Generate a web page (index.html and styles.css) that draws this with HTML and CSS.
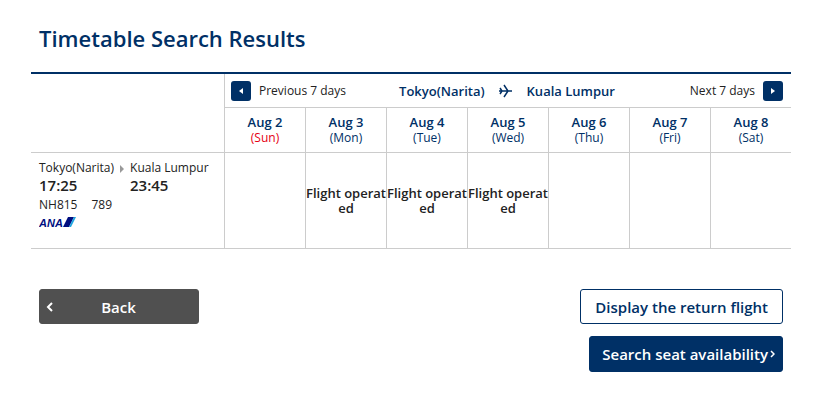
FILE: index.html
```html
<!DOCTYPE html>
<html lang="en">
<head>
    <meta charset="UTF-8">
    <title>Timetable Search Results</title>
    <link rel="stylesheet" href="styles.css">
</head>
<body>
    <main class="page">
        <h1>Timetable Search Results</h1>

        <table class="timetable">
            <colgroup>
                <col class="col-flight">
                <col span="7">
            </colgroup>
            <thead>
                <tr>
                    <td rowspan="2"></td>
                    <th colspan="7">
                        <div class="week-nav">
                            <button type="button" class="week-btn">
                                <span class="square"><svg width="4" height="6" viewBox="0 0 4 6"><path d="M4 0v6L0 3z" fill="#fff"/></svg></span>
                                Previous 7 days
                            </button>
                            <div class="route">
                                <span>Tokyo(Narita)</span>
                                <svg width="14" height="14" viewBox="0 0 14 14"><path d="M0 7h13M5 1l4 6-4 6M1 4l2 3-2 3" fill="none" stroke="#003066" stroke-width="1.5"/></svg>
                                <span>Kuala Lumpur</span>
                            </div>
                            <button type="button" class="week-btn week-next">
                                Next 7 days
                                <span class="square"><svg width="4" height="6" viewBox="0 0 4 6"><path d="M0 0v6l4-3z" fill="#fff"/></svg></span>
                            </button>
                        </div>
                    </th>
                </tr>
                <tr class="days">
                    <th>Aug 2<span class="sunday">(Sun)</span></th>
                    <th>Aug 3<span>(Mon)</span></th>
                    <th>Aug 4<span>(Tue)</span></th>
                    <th>Aug 5<span>(Wed)</span></th>
                    <th>Aug 6<span>(Thu)</span></th>
                    <th>Aug 7<span>(Fri)</span></th>
                    <th>Aug 8<span>(Sat)</span></th>
                </tr>
            </thead>
            <tbody>
                <tr>
                    <th class="flight">
                        <div class="legs">
                            <div>Tokyo(Narita)<span class="time">17:25</span></div>
                            <svg class="leg-arrow" width="4" height="8" viewBox="0 0 4 8"><path d="M0 0v8l4-4z" fill="#999"/></svg>
                            <div>Kuala Lumpur<span class="time">23:45</span></div>
                        </div>
                        <div class="number"><span>NH815</span><span>789</span></div>
                        <svg class="ana" width="37" height="11" viewBox="0 0 37 11" role="img" aria-label="ANA">
                            <text x="0" y="10">ANA</text>
                            <path d="M29 0h6l-5 10h-6z" fill="#000e80"/>
                            <path d="M35 0h2l-5 10h-2z" fill="#1ea5e0"/>
                        </svg>
                    </th>
                    <td></td>
                    <td class="operated">Flight operated</td>
                    <td class="operated">Flight operated</td>
                    <td class="operated">Flight operated</td>
                    <td></td>
                    <td></td>
                    <td></td>
                </tr>
            </tbody>
        </table>

        <div class="actions">
            <button type="button" class="btn btn-back">
                <svg width="7" height="10" viewBox="0 0 7 10"><path d="M6 1L2 5l4 4" fill="none" stroke="#fff" stroke-width="2"/></svg>
                <span>Back</span>
            </button>
            <div class="next-actions">
                <button type="button" class="btn btn-return">Display the return flight</button>
                <button type="button" class="btn btn-search">
                    Search seat availability
                    <svg width="5" height="8" viewBox="0 0 5 8"><path d="M1 1l3 3-3 3" fill="none" stroke="#fff" stroke-width="1.5"/></svg>
                </button>
            </div>
        </div>
    </main>
</body>
</html>
```
FILE: styles.css
```css
* {
    box-sizing: border-box;
}

body {
    margin: 0;
    background: #fff;
    color: #222;
    font-family: "Open Sans", "Noto Sans", sans-serif;
    font-size: 12px;
    line-height: 16px;
}

.page {
    padding: 24px 32px 24px 31px;
}

h1 {
    margin: 0 8px 20px;
    color: #003066;
    font-size: 22px;
    font-weight: 600;
    line-height: 28px;
}

/* Timetable */
.timetable {
    width: 100%;
    table-layout: fixed;
    border-collapse: separate;
    border-spacing: 0;
    border-top: 2px solid #003066;
}

.col-flight {
    width: 193px;
}

.timetable th,
.timetable td {
    padding: 0;
    border-bottom: 1px solid #ccc;
}

.timetable th + td,
.timetable td + td,
.timetable td + th,
.days th {
    border-left: 1px solid #ccc;
}

.week-nav {
    display: grid;
    grid-template-columns: 1fr auto 1fr;
    align-items: center;
    height: 33px;
    padding: 0 8px 0 6px;
}

.week-btn {
    display: flex;
    align-items: center;
    gap: 8px;
    padding: 0;
    border: 0;
    background: none;
    color: #222;
    font: inherit;
    font-weight: 400;
    cursor: pointer;
}

.week-next {
    justify-self: end;
}

.square {
    display: flex;
    align-items: center;
    justify-content: center;
    width: 20px;
    height: 20px;
    border-radius: 3px;
    background: #003066;
}

.route {
    display: flex;
    align-items: center;
    gap: 14px;
    color: #003066;
    font-size: 13px;
    font-weight: 600;
}

.days th {
    height: 45px;
    color: #003066;
    font-size: 13px;
    font-weight: 600;
    line-height: 15px;
}

.days span {
    display: block;
    font-size: 12px;
    font-weight: 400;
}

.days .sunday {
    color: #e60012;
}

.flight {
    height: 96px;
    font-weight: 400;
    text-align: left;
    vertical-align: top;
}

.timetable .flight {
    padding: 7px 8px 0;
}

.legs {
    display: flex;
    gap: 6px;
}

.leg-arrow {
    margin-top: 5px;
}

.time {
    display: block;
    font-size: 15px;
    font-weight: 600;
    line-height: 18px;
}

.number {
    display: flex;
    gap: 14px;
    margin: 3px 0 4px;
}

.ana {
    display: block;
}

.ana text {
    fill: #000e80;
    font-family: "Liberation Sans", sans-serif;
    font-size: 11px;
    font-style: italic;
    font-weight: 700;
}

.operated {
    font-size: 13px;
    font-weight: 600;
    line-height: 15px;
    text-align: center;
    word-break: break-all;
}

/* Buttons */
.actions {
    display: flex;
    align-items: flex-start;
    justify-content: space-between;
    margin: 40px 8px 0;
}

.next-actions {
    display: flex;
    flex-direction: column;
    align-items: flex-end;
    gap: 12px;
}

.btn {
    display: flex;
    align-items: center;
    height: 35px;
    border: 1px solid #003066;
    border-radius: 3px;
    font-family: inherit;
    font-size: 15px;
    font-weight: 600;
    cursor: pointer;
}

.btn-back {
    width: 160px;
    padding: 0 6px;
    border-color: #505050;
    background: #505050;
    color: #fff;
}

.btn-back span {
    flex: 1;
    padding-right: 8px;
}

.btn-return {
    padding: 0 14px;
    background: #fff;
    color: #003066;
}

.btn-search {
    gap: 2px;
    height: 36px;
    padding: 0 7px 0 12px;
    background: #003066;
    color: #fff;
}
```
